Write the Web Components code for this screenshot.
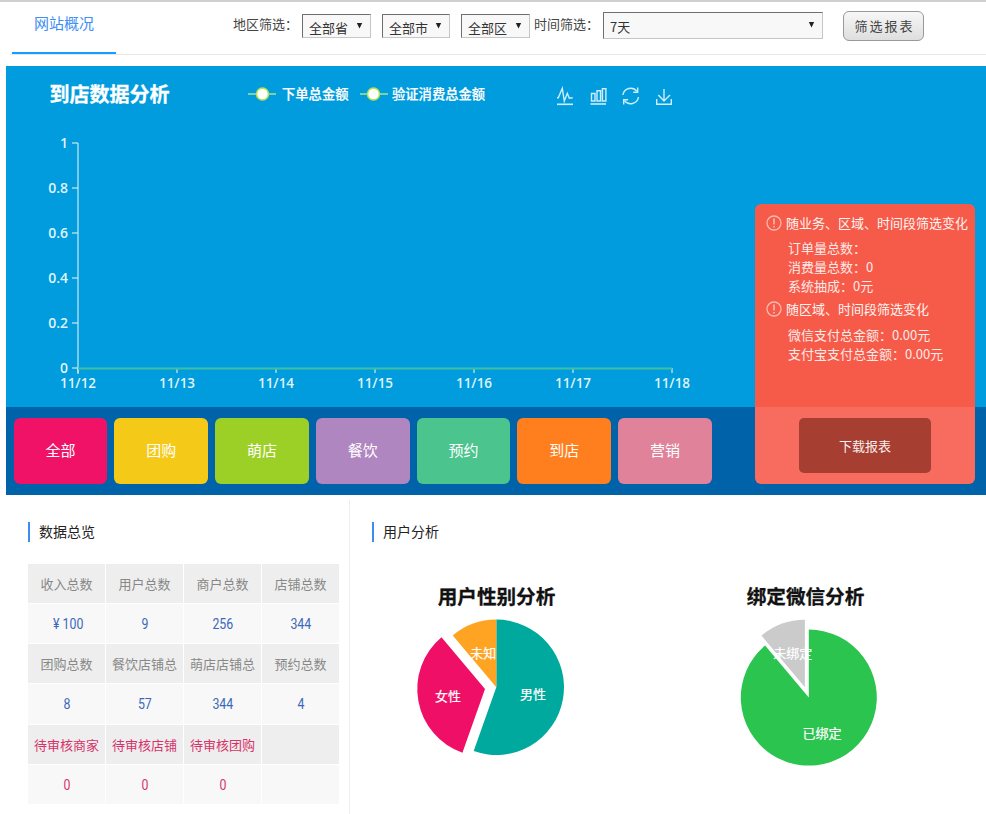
<!DOCTYPE html>
<html lang="zh"><head><meta charset="utf-8"><title>网站概况</title>
<style>
html,body{margin:0;padding:0;background:#fff;}
body{width:986px;height:814px;overflow:hidden;font-family:"Liberation Sans","Noto Sans CJK SC",sans-serif;}
</style></head><body>
<dash-page></dash-page>
<script>
const CJK='"Noto Sans CJK SC","Liberation Sans",sans-serif';
function def(name,html){
  customElements.define(name,class extends HTMLElement{
    constructor(){super();const r=this.attachShadow({mode:'open'});r.innerHTML=typeof html==='function'?html(this):html;}
  });
}
def('fake-select',`<style>
:host{display:flex;align-items:center;box-sizing:border-box;height:24px;width:var(--w,69px);background:#f8f8f8;border:1px solid;border-color:#6f6f6f #c6c6c6 #c6c6c6 #6f6f6f;padding-left:6px;font:13px ${CJK};color:#333;}
span{flex:1;padding-top:var(--pt,4px);line-height:16px}
svg{margin-right:7px;flex:none;margin-bottom:2px}
</style><span><slot></slot></span><svg width="7" height="7" viewBox="0 0 7 7"><path d="M0.8 1H6.2L3.5 6.5Z" fill="#222"/></svg>`);

def('filter-bar',`<style>
:host{display:flex;align-items:flex-start;height:53px;position:relative;}
:host::after{content:"";position:absolute;left:10px;right:0;bottom:0;height:1px;background:#e6e6e6}
.tab{margin-left:12px;width:104px;height:52px;box-sizing:border-box;border-bottom:2px solid #1a9bff;color:#3d8ef5;font:15px/20px ${CJK};padding:11px 0 0 22px;position:relative;z-index:1}
.f{display:flex;align-items:flex-start;margin-left:117px;font:13px/20px ${CJK};color:#444;}
.l{margin:12px 4px 0 0;white-space:nowrap}
fake-select{margin:12px 11px 0 0}
button{margin:9px 0 0 20px;width:81px;height:30px;box-sizing:border-box;border:1px solid #999;border-radius:6px;background:linear-gradient(#f7f7f7,#dedede);font:13px/20px ${CJK};color:#444;letter-spacing:2px;padding:0 0 0 2px}
</style>
<div class="tab">网站概况</div>
<div class="f"><span class="l">地区筛选&#xFF1A;</span>
<fake-select>全部省</fake-select><fake-select style="--w:68px">全部市</fake-select><fake-select style="--w:69px;margin-right:4px">全部区</fake-select>
<span class="l">时间筛选&#xFF1A;</span>
<fake-select style="--w:220px;--pt:2px;height:27px;margin-top:10px;margin-right:0">7天</fake-select>
<button>筛选报表</button></div>`);

const ticks=['11/12','11/13','11/14','11/15','11/16','11/17','11/18'];
const yt=[['1',143],['0.8',188],['0.6',233],['0.4',278],['0.2',323],['0',368]];
def('line-chart',()=>{
 const oy=66,ox=6;
 const X=x=>x-ox,Y=y=>y-oy;
 let s=`<style>:host{display:block;height:341px;background:#009cde;position:relative}svg{display:block;position:absolute;left:0;top:0}
 text{font-family:${CJK};fill:#fff}</style><svg width="980" height="341" viewBox="0 0 980 341">`;
 s+=`<text x="${X(49.5)}" y="${Y(102)}" font-size="20" font-weight="700" stroke="#fff" stroke-width=".3">到店数据分析</text>`;
 const leg=(a,c,tx,t)=>`<path d="M${X(a)} ${Y(94)}H${X(a+28)}" stroke="#7fd0a8" stroke-width="2"/><circle cx="${X(c)}" cy="${Y(94)}" r="6" fill="#fff" stroke="#b4e34b" stroke-width="1.5"/><text x="${X(tx)}" y="${Y(99)}" font-size="13.3" font-weight="500" stroke="#fff" stroke-width=".2">${t}</text>`;
 s+=leg(248,262.5,282,'下单总金额')+leg(360,373.5,392,'验证消费总金额');
 const st=`fill="none" stroke="#cfeefa" stroke-width="1.4"`;
 s+=`<g ${st} transform="translate(${X(557)},${Y(87)})">
 <path d="M0 10.7H1.3L5.3 1.3L7.3 14L10.3 6.3L12.3 11.3L15.7 10.7"/><path d="M0 17.3H16" stroke-width="1.6"/></g>
 <g ${st} transform="translate(${X(590)},${Y(87)})">
 <path d="M1.5 6.5h3.5v7.5h-3.5zM7 3.8h3.5v10.2h-3.5zM12.4 1.8h3.5v12.2h-3.5z"/><path d="M0.5 17H16" stroke-width="1.6"/></g>
 <g ${st} transform="translate(${X(630.7)},${Y(96)})">
 <path d="M-7.8 -1A7.9 7.9 0 0 1 6.3 -4.6"/><path d="M7 -8.5V-3.7H2.6"/><path d="M7.8 1A7.9 7.9 0 0 1 -6.3 4.6"/><path d="M-7 8.5V3.7H-2.6"/></g>
 <g ${st} transform="translate(${X(656.7)},${Y(87)})">
 <path d="M7.3 2V14M1.6 8L7.3 14L13.3 8"/><path d="M0 12V17.3H14.6V12"/></g>`;
 s+=`<g stroke="#cbe9f5" stroke-width="1.2" fill="none"><path d="M${X(78)} ${Y(143)}V${Y(374)}"/>`;
 yt.forEach(([,y])=>s+=`<path d="M${X(72)} ${Y(y)}H${X(78)}"/>`);
 ticks.forEach((_,i)=>s+=`<path d="M${X(78+99*i)} ${Y(368)}v5"/>`);
 s+=`</g><path d="M${X(78)} ${Y(368.5)}H${X(672)}" stroke="#3fbf9f" stroke-width="2"/>`;
 yt.forEach(([t,y])=>s+=`<text x="${X(68)}" y="${Y(y+5)}" text-anchor="end" font-size="14" style="font-family:'Open Sans',sans-serif;fill:#dff3fb;font-weight:600">${t}</text>`);
 ticks.forEach((t,i)=>s+=`<text x="${X(78+99*i)}" y="${Y(388)}" text-anchor="middle" font-size="13.5" style="font-family:'Open Sans',sans-serif;fill:#dff3fb;font-weight:600">${t}</text>`);
 return s+`</svg>`;
});

def('cat-btn',`<style>:host{display:flex;align-items:center;justify-content:center;flex:1;height:66px;box-sizing:border-box;padding-bottom:3px;border-radius:6px;background:var(--c);color:#fff;font:15px ${CJK}}</style><slot></slot>`);
const warn=`<svg width="16" height="16" viewBox="0 0 16 16"><circle cx="8" cy="8" r="7" fill="none" stroke="#fbb9b0" stroke-width="1.3"/><path d="M8 3.5V9.5M8 11V12.5" stroke="#fbb9b0" stroke-width="1.6"/></svg>`;
def('info-panel',`<style>
:host{display:flex;flex-direction:column;position:absolute;left:749px;top:138px;width:220px;height:280px;border-radius:6px;overflow:hidden;color:#fff;font:13px/19px ${CJK}}
.top{height:203px;background:#f65b4a;box-sizing:border-box;padding:8px 0 0 11px}
.bot{height:77px;background:#f76c5f;display:flex;justify-content:center;padding-top:11px;box-sizing:border-box}
.h{display:flex;align-items:center;gap:4px;height:20px;white-space:nowrap;color:#fff5f2}
.h svg{flex:none;margin-top:2px}
.b{margin:6px 0 0 22px;color:#fdeae7}
.dl{width:132px;height:55px;background:#a63e32;border-radius:5px;display:flex;align-items:center;justify-content:center;color:#fbeeec}
</style><div class="top">
<div class="h">${warn}随业务、区域、时间段筛选变化</div>
<div class="b">订单量总数&#xFF1A;<br>消费量总数&#xFF1A;0<br>系统抽成&#xFF1A;0元</div>
<div class="h" style="margin-top:3px">${warn}随区域、时间段筛选变化</div>
<div class="b" style="margin-top:7px">微信支付总金额&#xFF1A;0.00元<br>支付宝支付总金额&#xFF1A;0.00元</div>
</div><div class="bot"><div class="dl">下载报表</div></div>`);

def('blue-board',`<style>
:host{display:block;margin:11px 0 0 6px;width:980px;height:429px;position:relative}
.band{height:88px;background:#0062a8;box-sizing:border-box;padding:11px 274px 11px 7.5px;display:flex;gap:7px}
</style><line-chart></line-chart><div class="band">
<cat-btn style="--c:#f01266">全部</cat-btn><cat-btn style="--c:#f4c918">团购</cat-btn><cat-btn style="--c:#9dd026">萌店</cat-btn><cat-btn style="--c:#b086c1">餐饮</cat-btn><cat-btn style="--c:#4bc48e">预约</cat-btn><cat-btn style="--c:#ff7e1d">到店</cat-btn><cat-btn style="--c:#e0839a">营销</cat-btn>
</div><info-panel></info-panel>`);

def('sec-title',`<style>:host{display:block;box-sizing:border-box;height:20px;border-left:2px solid #3b8cf7;padding-left:9px;font:14px/18px ${CJK};color:#222}</style><slot></slot>`);

def('stats-table',()=>{
 const rows=[
  ['h',['收入总数','用户总数','商户总数','店铺总数']],['v',['¥ 100','9','256','344']],
  ['h',['团购总数','餐饮店铺总','萌店店铺总','预约总数']],['v',['8','57','344','4']],
  ['hp',['待审核商家','待审核店铺','待审核团购','']],['vp',['0','0','0','']]];
 let s=`<style>:host{display:grid;grid-template-columns:repeat(4,77px);gap:1px;grid-template-rows:39px 39px 39px 40px 39px 39px;width:311px}
 div{display:flex;align-items:center;justify-content:center;white-space:nowrap;font:13px ${CJK};overflow:hidden}
 .h,.hp{background:#eeeeee}.v,.vp{background:#f8f8f8}
 .h{color:#888;padding-bottom:1px}.v{color:#3b68b8}.hp,.vp{color:#d6336c}
 b{font:400 14px "Roboto",sans-serif;display:inline-block;transform:scaleX(.88)}
 b.y{margin-left:3px}</style>`;
 rows.forEach(([c,a])=>a.forEach(t=>{const v=c[0]==='v'&&t;s+=`<div class="${c}">${v?`<b${t[0]==='¥'?' class="y"':''}>${t}</b>`:t}</div>`;}));
 return s;
});

const pt=(cx,cy,r,a)=>[cx+r*Math.sin(a*Math.PI/180),cy-r*Math.cos(a*Math.PI/180)];
function sec(cx,cy,r,a,b,f){const [x1,y1]=pt(cx,cy,r,a),[x2,y2]=pt(cx,cy,r,b);
 return `<path d="M${cx} ${cy}L${x1.toFixed(2)} ${y1.toFixed(2)}A${r} ${r} 0 ${b-a>180?1:0} 1 ${x2.toFixed(2)} ${y2.toFixed(2)}Z" fill="${f}"/>`;}
def('pie-charts',()=>{
 const ox=350,oy=570, X=x=>x-ox, Y=y=>y-oy;
 let s=`<style>:host{display:block;height:210px;position:relative}svg{display:block}text{font-family:${CJK};text-anchor:middle;fill:#fff;font-size:13px;stroke:#fff;stroke-width:.2px}
 .t{fill:#111;font-size:19.6px;font-weight:700;stroke:#111;stroke-width:.3px}</style><svg width="636" height="210">`;
 s+=`<text class="t" x="${X(496.5)}" y="${Y(604)}">用户性别分析</text><text class="t" x="${X(805.5)}" y="${Y(604)}">绑定微信分析</text>`;
 s+=sec(X(496.3),Y(687.3),67.7,0,199.5,'#00a99d')+sec(X(496.3),Y(687.3),67.7,320,360,'#ffa322')+sec(X(485),Y(689),67.7,199.5,320,'#f00f66');
 s+=sec(X(808.8),Y(697.6),68,0,320,'#2bc44f')+sec(X(804.9),Y(687.3),67.5,320,360,'#cbcbcb');
 [['未知',483.3,658],['女性',448,701],['男性',533,698.5],['未绑定',792.7,658],['已绑定',822,738]].forEach(([t,x,y])=>s+=`<text x="${X(x)}" y="${Y(y)}">${t}</text>`);
 return s+`</svg>`;
});

def('bottom-row',`<style>
:host{display:flex;height:314px;margin-top:5px}
.l{width:350px;box-sizing:border-box;border-right:1px solid #eee;padding:22px 0 0 28px}
.r{flex:1;padding:22px 0 0 22px}
stats-table{margin-top:22px}
pie-charts{margin:28px 0 0 -22px}
</style><div class="l"><sec-title>数据总览</sec-title><stats-table></stats-table></div>
<div class="r"><sec-title>用户分析</sec-title><pie-charts></pie-charts></div>`);

def('dash-page',`<style>:host{display:block;width:986px;border-top:2px solid #d0d0d0;box-sizing:border-box}</style><filter-bar></filter-bar><blue-board></blue-board><bottom-row></bottom-row>`);
</script></body></html>
